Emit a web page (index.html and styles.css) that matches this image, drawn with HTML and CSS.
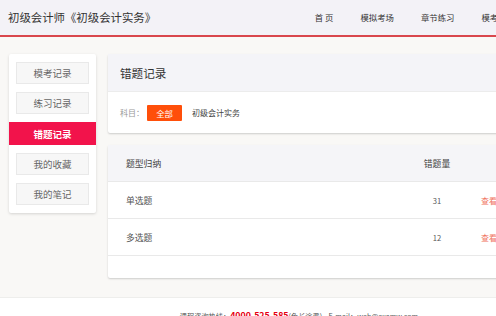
FILE: index.html
```html
<!DOCTYPE html>
<html lang="zh-CN">

<head>
    <meta charset="UTF-8">
    <meta name="viewport" content="width=device-width, initial-scale=1.0">
    <title>错题记录</title>
    <link rel="stylesheet" href="styles.css">
</head>

<body>
    <div class="page">

        <!-- ----------- header ---------------- -->
        <div class="header">
            <div class="site-title">初级会计师《初级会计实务》</div>
            <ul class="nav">
                <li>首 页</li>
                <li>模拟考场</li>
                <li>章节练习</li>
                <li>模考记录</li>
            </ul>
        </div>

        <div class="content">

            <!-- ----------- sidebar ---------------- -->
            <div class="side">
                <div class="side-item">模考记录</div>
                <div class="side-item">练习记录</div>
                <div class="side-item active">错题记录</div>
                <div class="side-item">我的收藏</div>
                <div class="side-item">我的笔记</div>
            </div>

            <!-- ----------- main ---------------- -->
            <div class="main">

                <div class="panel">
                    <div class="panel-head">错题记录</div>
                    <div class="filter">
                        <span class="filter-label">科目：</span>
                        <span class="btn-all">全部</span>
                        <span class="filter-opt">初级会计实务</span>
                    </div>
                </div>

                <div class="panel">
                    <div class="row row-head">
                        <div class="cell-name">题型归纳</div>
                        <div class="cell-num">错题量</div>
                        <div class="cell-op"></div>
                    </div>
                    <div class="row">
                        <div class="cell-name">单选题</div>
                        <div class="cell-num">31</div>
                        <div class="cell-op">查看</div>
                    </div>
                    <div class="row">
                        <div class="cell-name">多选题</div>
                        <div class="cell-num">12</div>
                        <div class="cell-op">查看</div>
                    </div>
                    <div class="row-empty"></div>
                </div>

            </div>
        </div>

        <!-- ----------- footer ---------------- -->
        <div class="footer">
            课程咨询热线：<b class="tel">4000-525-585</b>(免长途费)&nbsp;&nbsp;&nbsp;&nbsp;E-mail：web@examw.com
        </div>

    </div>
</body>

</html>
```

FILE: styles.css
```css
* {
    box-sizing: border-box;
    padding: 0;
    margin: 0;
}

html,
body {
    overflow: hidden;
    background: #f9f8f6;
    font-family: "Noto Sans CJK SC", "Liberation Sans", sans-serif;
    color: #333;
}

.page {
    width: 598px;
}

/* header */

.header {
    height: 37px;
    display: flex;
    align-items: center;
    justify-content: space-between;
    background: #f3f2f7;
    border-bottom: 2px solid #d9474d;
    padding: 0 0 2px 8px;
}

.site-title {
    font-size: 11.4px;
    color: #333;
}

.nav {
    list-style: none;
    display: flex;
    font-size: 8.4px;
    margin-right: 83px;
}

.nav li {
    margin-left: 27px;
}

/* content */

.content {
    display: flex;
    align-items: flex-start;
    gap: 12px;
    padding: 17px 9px 19px 9px;
}

.side {
    width: 87px;
    background: #fff;
    display: flex;
    flex-direction: column;
    gap: 8px;
    padding: 8px 0;
    box-shadow: 0 1px 3px rgba(0, 0, 0, 0.15);
    border-radius: 2px;
}

.side-item {
    height: 22px;
    margin: 0 7px;
    background: #f7f7f7;
    border: 1px solid #e9e9e9;
    font-size: 9.5px;
    color: #666;
    display: flex;
    align-items: center;
    justify-content: center;
}

.side-item.active {
    margin: 0;
    height: 23px;
    background: #f2134b;
    border-color: #f2134b;
    color: #fff;
    font-weight: bold;
}

.main {
    flex: 1;
    display: flex;
    flex-direction: column;
    gap: 12px;
}

.panel {
    background: #fff;
    box-shadow: 0 1px 2px rgba(0, 0, 0, 0.18);
    border-radius: 2px;
}

.panel-head {
    height: 38px;
    background: #f4f4f8;
    border-bottom: 1px solid #ececec;
    font-size: 11.6px;
    padding-left: 12px;
    display: flex;
    align-items: center;
}

.filter {
    height: 41px;
    display: flex;
    align-items: center;
    padding-left: 12px;
    font-size: 8px;
}

.filter-label {
    color: #999;
    width: 27px;
}

.btn-all {
    width: 35px;
    height: 16px;
    background: #ff4f0a;
    color: #fff;
    display: flex;
    align-items: center;
    justify-content: center;
    font-size: 8.4px;
    border-radius: 1px;
}

.filter-opt {
    margin-left: 10px;
    color: #444;
}

/* table */

.row {
    display: grid;
    grid-template-columns: 299px 60px 1fr;
    height: 37px;
    align-items: center;
    border-bottom: 1px solid #e9e9e9;
    font-size: 8.8px;
    color: #555;
}

.row-head {
    background: #f5f5f8;
    color: #444;
}

.cell-name {
    padding-left: 18px;
}

.cell-num {
    text-align: center;
    font-size: 7.6px;
}

.row-head .cell-num {
    font-size: 8.8px;
}

.cell-op {
    padding-left: 14px;
    color: #f0735f;
    font-size: 8px;
}

.row-empty {
    height: 22px;
}

/* footer */

.footer {
    background: #fff;
    border-top: 1px solid #eeeeec;
    text-align: center;
    font-size: 7.2px;
    color: #555;
    padding-top: 11px;
    height: 40px;
}

.tel {
    color: #e60012;
    font-size: 8.8px;
}
```
